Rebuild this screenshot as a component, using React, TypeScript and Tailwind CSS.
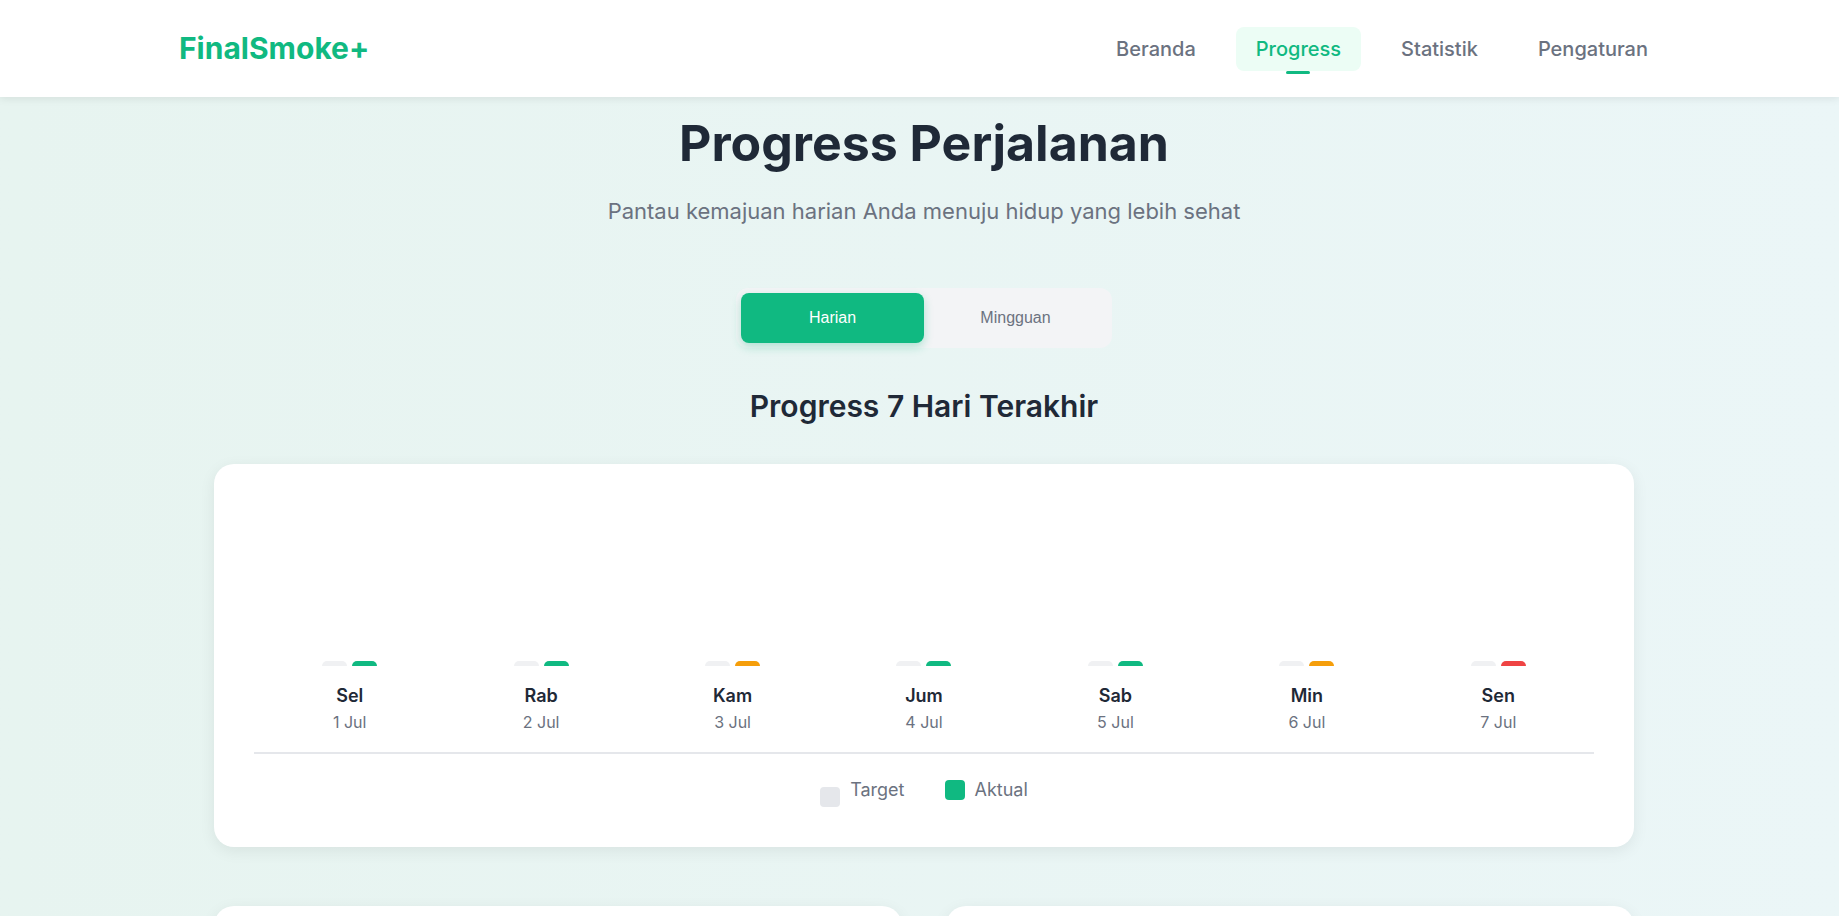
import { useState } from "react";

type Day = {
  day: string;
  date: string;
  color: string;
};

const days: Day[] = [
  { day: "Sel", date: "1 Jul", color: "bg-[#10b981]" },
  { day: "Rab", date: "2 Jul", color: "bg-[#10b981]" },
  { day: "Kam", date: "3 Jul", color: "bg-[#f59e0b]" },
  { day: "Jum", date: "4 Jul", color: "bg-[#10b981]" },
  { day: "Sab", date: "5 Jul", color: "bg-[#10b981]" },
  { day: "Min", date: "6 Jul", color: "bg-[#f59e0b]" },
  { day: "Sen", date: "7 Jul", color: "bg-[#ef4444]" },
];

const navItems = ["Beranda", "Progress", "Statistik", "Pengaturan"];

const App = () => {
  const [mode, setMode] = useState<"harian" | "mingguan">("harian");

  return (
    <div className="min-h-screen bg-gradient-to-r from-[#e7f4f0] to-[#ebf6f7] font-['Inter','Noto_Sans',sans-serif]">
      {/* Header */}
      <header className="h-[97px] bg-white shadow-[0_2px_8px_rgba(0,0,0,0.08)] relative z-10">
        <div className="h-full flex items-center justify-between pl-[179px] pr-[171px]">
          <div className="text-[30px] font-bold text-[#10b981]">FinalSmoke+</div>
          <nav className="flex items-center gap-5">
            {navItems.map((item) => {
              const active = item === "Progress";
              return (
                <a
                  key={item}
                  href="#"
                  className={`relative px-5 py-2 rounded-lg text-xl font-medium ${
                    active ? "bg-[#ecfdf5] text-[#10b981]" : "text-[#6b7280]"
                  }`}
                >
                  {item}
                  {active && (
                    <span className="absolute left-1/2 -translate-x-1/2 -bottom-[3px] w-6 h-[3px] rounded-full bg-[#10b981]" />
                  )}
                </a>
              );
            })}
          </nav>
        </div>
      </header>

      {/* Main */}
      <main className="pl-[9px]">
        <div className="w-[1420px] mx-auto pt-[16px]">
          {/* Title */}
          <div className="text-center">
            <h1 className="text-[50px] leading-[1.2] font-bold text-[#1f2937]">
              Progress Perjalanan
            </h1>
            <p className="mt-[23px] text-[22px] leading-[30px] text-[#6b7280]">
              Pantau kemajuan harian Anda menuju hidup yang lebih sehat
            </p>
          </div>

          {/* Toggle */}
          <div className="mt-[62px] flex justify-center">
            <div className="flex p-[5px] bg-[#f3f4f6] rounded-xl font-['Liberation_Sans',Arial,sans-serif]">
              <button
                onClick={() => setMode("harian")}
                className={`w-[183px] h-[50px] rounded-lg text-base ${
                  mode === "harian"
                    ? "bg-[#10b981] text-white shadow-[0_4px_10px_rgba(16,185,129,0.3)]"
                    : "text-[#6b7280]"
                }`}
              >
                Harian
              </button>
              <button
                onClick={() => setMode("mingguan")}
                className={`w-[183px] h-[50px] rounded-lg text-base ${
                  mode === "mingguan"
                    ? "bg-[#10b981] text-white shadow-[0_4px_10px_rgba(16,185,129,0.3)]"
                    : "text-[#6b7280]"
                }`}
              >
                Mingguan
              </button>
            </div>
          </div>

          {/* Chart heading */}
          <h2 className="mt-[40px] text-center text-3xl font-semibold text-[#1f2937]">
            Progress 7 Hari Terakhir
          </h2>

          {/* Chart card */}
          <div className="mt-[40px] bg-white rounded-[20px] shadow-[0_4px_16px_rgba(0,0,0,0.07)] px-10 pt-10 pb-[43px]">
            <div className="grid grid-cols-7 border-b-2 border-[#e5e7eb] pb-[18px]">
              {days.map((d) => (
                <div key={d.day} className="flex flex-col items-center">
                  <div className="h-[162px] flex items-end gap-[5px]">
                    <div className="w-[25px] h-[5px] rounded-t-md bg-[#f0f1f3]" />
                    <div className={`w-[25px] h-[5px] rounded-t-md ${d.color}`} />
                  </div>
                  <div className="mt-4 text-lg font-semibold text-[#1f2937]">
                    {d.day}
                  </div>
                  <div className="text-base text-[#6b7280]">{d.date}</div>
                </div>
              ))}
            </div>

            {/* Legend */}
            <div className="pt-[22px] flex items-center justify-center gap-10 text-lg text-[#6b7280]">
              <div className="flex items-center gap-2.5">
                <span className="w-5 h-5 rounded bg-[#e5e7eb] translate-y-[7px]" />
                <span>Target</span>
              </div>
              <div className="flex items-center gap-2.5">
                <span className="w-5 h-5 rounded bg-[#10b981]" />
                <span>Aktual</span>
              </div>
            </div>
          </div>

          {/* Bottom cards */}
          <div className="mt-[59px] grid grid-cols-2 gap-[44px] pb-10">
            <div className="bg-white rounded-[20px] shadow-[0_4px_16px_rgba(0,0,0,0.07)] h-[320px]" />
            <div className="bg-white rounded-[20px] shadow-[0_4px_16px_rgba(0,0,0,0.07)] h-[320px]" />
          </div>
        </div>
      </main>
    </div>
  );
};

export default App;
